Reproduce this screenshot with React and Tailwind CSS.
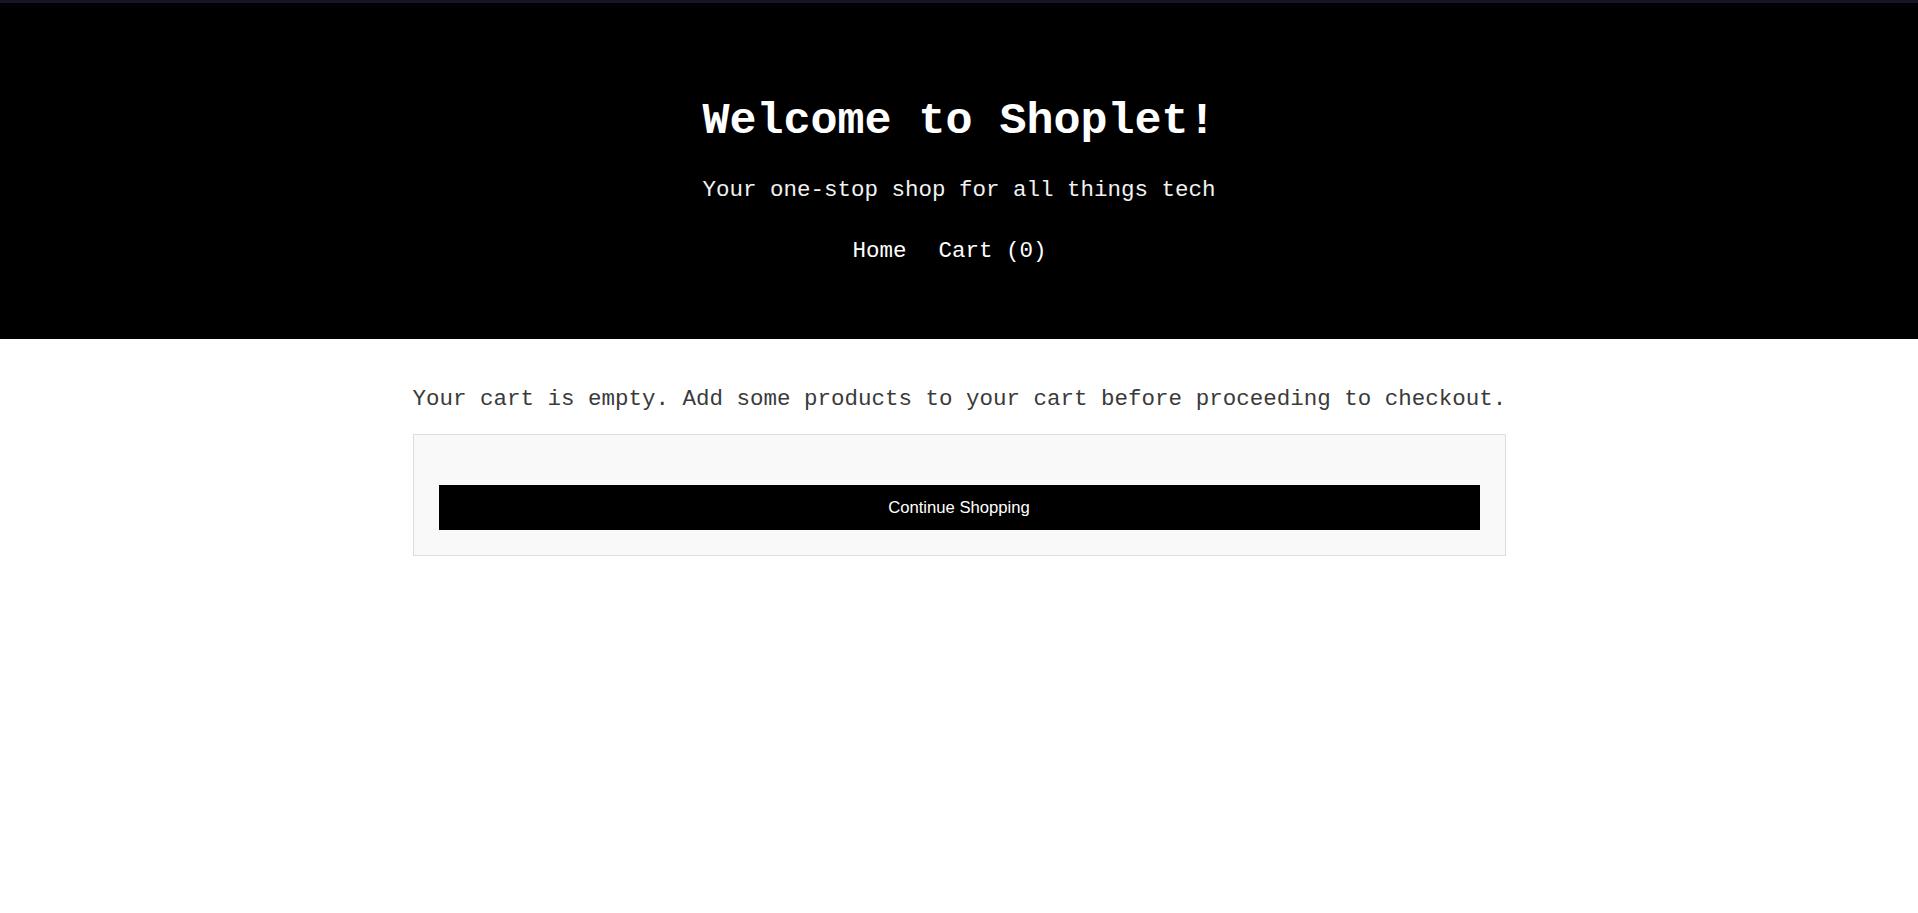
export default function App() {
  return (
    <div className="min-h-[913px] bg-white font-['Liberation_Mono','Courier_New',monospace]">
      <header className="bg-black text-white pt-[93px] pb-[75px] border-t-[3px] border-[#15152a]">
        <h1 className="text-center text-[45px] leading-[51px] font-bold">Welcome to Shoplet!</h1>
        <p className="mt-[31px] text-center text-[22.5px] leading-[25.5px] text-[#f2f2f2]">
          Your one-stop shop for all things tech
        </p>
        <nav className="mt-[35px] flex justify-center text-[22.5px] leading-[25.5px]">
          <a href="#" className="mr-[32px]">Home</a>
          <a href="#" className="mr-[19px]">Cart (0)</a>
        </nav>
      </header>
      <main className="mx-auto w-[1093px] pt-[48px]">
        <p className="text-[22.5px] leading-[25.5px] text-[#3a3a3a] whitespace-nowrap">
          Your cart is empty. Add some products to your cart before proceeding to checkout.
        </p>
        <div className="mt-[21px] border border-[#ddd] bg-[#f9f9f9] px-[25px] pt-[50px] pb-[25px]">
          <button
            type="button"
            className="block w-full h-[45px] bg-black text-white text-[16.67px] font-['Liberation_Sans',Arial,sans-serif]"
          >
            Continue Shopping
          </button>
        </div>
      </main>
    </div>
  );
}
